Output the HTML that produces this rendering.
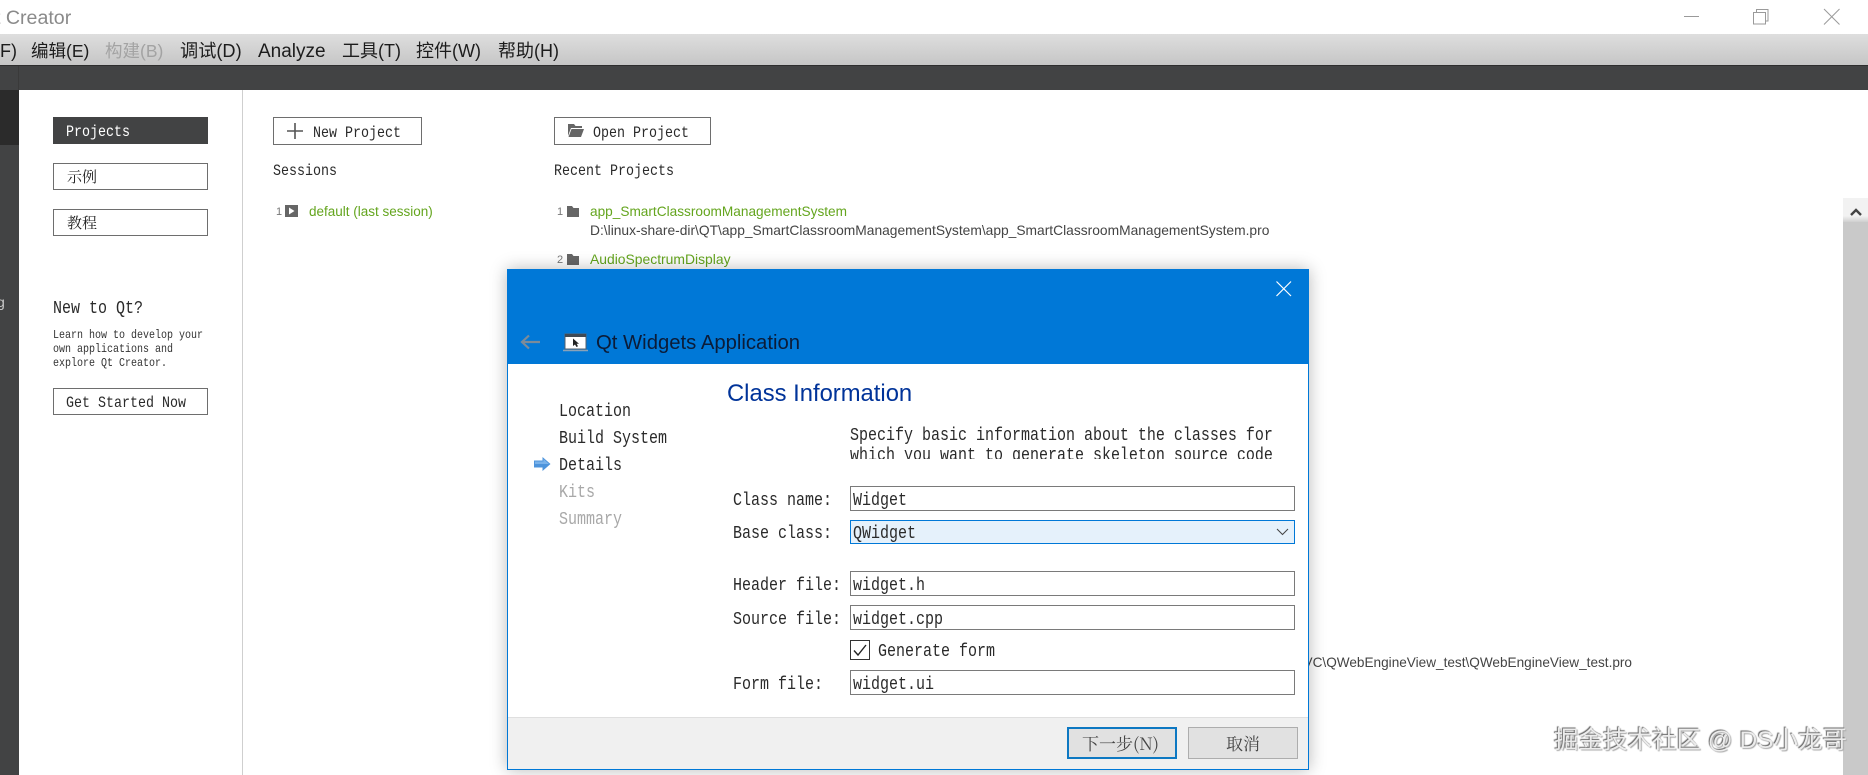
<!DOCTYPE html>
<html lang="zh"><head><meta charset="utf-8"><title>Qt Creator</title>
<style>
html,body{margin:0;padding:0;width:1868px;height:775px;overflow:hidden;background:#fff}
#r{position:relative;width:1868px;height:775px;overflow:hidden;background:#fff}
.a{position:absolute;box-sizing:border-box}
.t{position:absolute;white-space:pre;height:20px;line-height:20px}
.s{font-family:"Liberation Sans","Noto Sans CJK SC",sans-serif}
.m{font-family:"Liberation Mono","Noto Serif CJK SC",monospace;transform-origin:0 50%;transform:translateY(1px) scaleX(.833);color:#2a2a2a}
.m18{font-size:18px}.m16{font-size:16px}.m12{font-size:12px}
.menu{font-size:18px;color:#1c1c1c;top:41px}
.btn{position:absolute;box-sizing:border-box;border:1px solid #6e6e6e;background:#fff}
.g{color:#64a51e;font-size:14px}
.p{color:#444;font-size:13.6px}
.n{color:#777;font-size:11px}
.f{position:absolute;left:850px;width:445px;height:25px;box-sizing:border-box;border:1px solid #7a7a7a;background:#fff}
</style></head><body><div id="r">
<!-- title bar -->
<div class="t s" style="left:-5px;top:8px;font-size:19.6px;color:#8a8a8a">t Creator</div>
<svg class="a" style="left:1680px;top:5px" width="170" height="24" fill="none" stroke="#9a9a9a" stroke-width="1">
<path d="M4 11.500H19"/>
<path d="M76.500 7.500V4.500H88V16H85.500"/>
<rect x="73.500" y="7.500" width="12" height="11.500"/>
<path d="M144 4L159.500 19.500M159.500 4L144 19.500"/>
</svg>
<!-- menu -->
<div class="a" style="left:0;top:34px;width:1868px;height:31px;background:linear-gradient(#dedede,#c6c6c6)"></div>
<div class="t s menu" style="left:0">F)</div>
<div class="t s menu" style="left:31px;font-size:17.500px">编辑(E)</div>
<div class="t s menu" style="left:105px;color:#a3a3a3;font-size:17.500px">构建(B)</div>
<div class="t s menu" style="left:180px;font-size:18.200px">调试(D)</div>
<div class="t s menu" style="left:258px;font-size:19px;top:42px">Analyze</div>
<div class="t s menu" style="left:342px">工具(T)</div>
<div class="t s menu" style="left:416px">控件(W)</div>
<div class="t s menu" style="left:498px">帮助(H)</div>
<!-- dark bar -->
<div class="a" style="left:0;top:65px;width:1868px;height:25px;background:#424344;border-top:1px solid #2e2e2e"></div>
<div class="a" style="left:0;top:90px;width:19px;height:685px;background:#424344"></div>
<div class="a" style="left:0;top:90px;width:19px;height:55px;background:#2b2b2b"></div>
<div class="a" style="left:18px;top:66px;width:1px;height:24px;background:#3a3a3a"></div>
<div class="t s" style="left:-3px;top:292px;font-size:14px;color:#ccc;">g</div>
<!-- left column -->
<div class="a" style="left:242px;top:90px;width:1px;height:685px;background:#cfcfcf"></div>
<div class="a" style="left:53px;top:117px;width:155px;height:27px;background:#424344"></div>
<div class="t m m16" style="left:66px;top:121px;color:#fff">Projects</div>
<div class="btn" style="left:53px;top:163px;width:155px;height:27px"></div>
<div class="t" style="left:67px;top:167px;font:15px/20px 'Noto Serif CJK SC',serif;color:#222">示例</div>
<div class="btn" style="left:53px;top:209px;width:155px;height:27px"></div>
<div class="t" style="left:67px;top:213px;font:15px/20px 'Noto Serif CJK SC',serif;color:#222">教程</div>
<div class="t m m18" style="left:53px;top:298px">New to Qt?</div>
<div class="t m m12" style="left:53px;top:324px;color:#333">Learn how to develop your</div>
<div class="t m m12" style="left:53px;top:338px;color:#333">own applications and</div>
<div class="t m m12" style="left:53px;top:352px;color:#333">explore Qt Creator.</div>
<div class="btn" style="left:53px;top:388px;width:155px;height:27px"></div>
<div class="t m m16" style="left:66px;top:392px">Get Started Now</div>
<!-- main -->
<div class="btn" style="left:273px;top:117px;width:149px;height:28px"></div>
<svg class="a" style="left:287px;top:123px" width="16" height="16"><path d="M8 0V16M0 8H16" stroke="#555" stroke-width="1.600"/></svg>
<div class="t m m16" style="left:313px;top:122px">New Project</div>
<div class="btn" style="left:554px;top:117px;width:157px;height:28px"></div>
<svg class="a" style="left:568px;top:124px" width="16" height="13"><path d="M0 0H6L7.500 2H14V4H3L0 12ZM3.500 5H16L13 13H0.500Z" fill="#666"/></svg>
<div class="t m m16" style="left:593px;top:122px">Open Project</div>
<div class="t m m16" style="left:273px;top:160px">Sessions</div>
<div class="t m m16" style="left:554px;top:160px">Recent Projects</div>
<div class="t s n" style="left:276px;top:202px">1</div>
<svg class="a" style="left:285px;top:205px" width="14" height="13"><rect width="13" height="12" fill="#666"/><path d="M4 2.500L9.500 6L4 9.500Z" fill="#fff"/></svg>
<div class="t s g" style="left:309px;top:202px;font-size:13.500px">default (last session)</div>
<div class="t s n" style="left:557px;top:202px">1</div>
<svg class="a" style="left:567px;top:206px" width="13" height="12"><path d="M0 0H5L6.500 2H12V11H0Z" fill="#666"/></svg>
<div class="t s g" style="left:590px;top:202px;font-size:13.650px">app_SmartClassroomManagementSystem</div>
<div class="t s p" style="left:590px;top:221px;font-size:13.800px">D:\linux-share-dir\QT\app_SmartClassroomManagementSystem\app_SmartClassroomManagementSystem.pro</div>
<div class="t s n" style="left:557px;top:250px">2</div>
<svg class="a" style="left:567px;top:254px" width="13" height="12"><path d="M0 0H5L6.500 2H12V11H0Z" fill="#666"/></svg>
<div class="t s g" style="left:590px;top:249px;font-size:13.900px">AudioSpectrumDisplay</div>
<div class="t s p" style="right:236px;top:653px;font-size:13.600px">D:\VC\QWebEngineView_test\QWebEngineView_test.pro</div>
<!-- scrollbar -->
<div class="a" style="left:1843px;top:198px;width:25px;height:577px;background:#c9c9c9"></div>
<div class="a" style="left:1843px;top:198px;width:25px;height:24px;background:linear-gradient(#f2f2f2 75%,#cfcfcf)"></div>
<svg class="a" style="left:1850px;top:207px" width="12" height="10"><path d="M1 8L6 3L11 8" fill="none" stroke="#444" stroke-width="2.400"/></svg>
<!-- dialog -->
<div class="a" style="left:507px;top:269px;width:802px;height:501px;background:#fff;border:1px solid #0078d7;box-shadow:0 0 16px rgba(0,0,0,.28)"></div>
<div class="a" style="left:507px;top:269px;width:802px;height:95px;background:#0078d7"></div>
<svg class="a" style="left:1276px;top:281px" width="16" height="16"><path d="M.5 .5L15 15M15 .5L.5 15" stroke="#fff" stroke-width="1.200" fill="none"/></svg>
<svg class="a" style="left:520px;top:334px" width="21" height="16"><path d="M20 8H2M9 1.500L2 8L9 14.500" fill="none" stroke="#7c8b99" stroke-width="2.200"/></svg>
<svg class="a" style="left:563px;top:333px" width="25" height="20"><rect x="2" y="1" width="21" height="15" fill="#fff" stroke="#54616e"/><rect x="2" y="1" width="21" height="3" fill="#3f4a55"/><path d="M0 17.500H25" stroke="#8aa2b8" stroke-width="1.500"/><path d="M10 5.500V13L12 11.500L13.500 14L15 13.300L13.600 10.800H16Z" fill="#222"/></svg>
<div class="t s" style="left:596px;top:333px;font-size:20.300px;color:#0b1c38">Qt Widgets Application</div>
<div class="t s" style="left:727px;top:384px;font-size:23.800px;color:#003399">Class Information</div>
<div class="t m m18" style="left:559px;top:401px">Location</div>
<div class="t m m18" style="left:559px;top:428px">Build System</div>
<svg class="a" style="left:534px;top:457px" width="17" height="14"><path d="M0 3.500H8.500V0L16.500 7L8.500 14V10.500H0Z" fill="#4d94dc"/><path d="M1 4.500H9.500V2L15 7L1 7Z" fill="#79b2ea"/></svg>
<div class="t m m18" style="left:559px;top:455px">Details</div>
<div class="t m m18" style="left:559px;top:482px;color:#a8a8a8">Kits</div>
<div class="t m m18" style="left:559px;top:509px;color:#a8a8a8">Summary</div>
<div class="t m m18" style="left:850px;top:425px">Specify basic information about the classes for</div>
<div class="a" style="left:850px;top:440px;width:445px;height:19px;overflow:hidden"><div class="t m m18" style="left:0;top:5px">which you want to generate skeleton source code</div></div>
<div class="t m m18" style="left:733px;top:490px">Class name:</div>
<div class="t m m18" style="left:733px;top:523px">Base class:</div>
<div class="t m m18" style="left:733px;top:575px">Header file:</div>
<div class="t m m18" style="left:733px;top:609px">Source file:</div>
<div class="t m m18" style="left:733px;top:674px">Form file:</div>
<div class="f" style="top:486px"></div><div class="t m m18" style="left:853px;top:490px">Widget</div>
<div class="f" style="top:520px;height:24px;border-color:#0078d7;background:#e5f1fb"></div><div class="t m m18" style="left:853px;top:523px">QWidget</div>
<svg class="a" style="left:1276px;top:528px" width="13" height="8"><path d="M1 1L6.500 6.500L12 1" fill="none" stroke="#444" stroke-width="1"/></svg>
<div class="f" style="top:571px"></div><div class="t m m18" style="left:853px;top:575px">widget.h</div>
<div class="f" style="top:605px"></div><div class="t m m18" style="left:853px;top:609px">widget.cpp</div>
<div class="a" style="left:850px;top:640px;width:20px;height:20px;border:1px solid #333;background:#fff"></div>
<svg class="a" style="left:850px;top:640px" width="20" height="20"><path d="M4 10.500L8 15L16 5" fill="none" stroke="#222" stroke-width="1.400"/></svg>
<div class="t m m18" style="left:878px;top:641px">Generate form</div>
<div class="f" style="top:670px"></div><div class="t m m18" style="left:853px;top:674px">widget.ui</div>
<div class="a" style="left:508px;top:717px;width:800px;height:52px;background:#f0f0f0;border-top:1px solid #dfdfdf"></div>
<div class="a" style="left:1067px;top:727px;width:110px;height:32px;background:#e1e1e1;border:2px solid #0d78c2"></div>
<div class="t" style="left:1082px;top:733px;font:17px/20px 'Noto Serif CJK SC',serif;color:#444">下一步(N)</div>
<div class="a" style="left:1188px;top:727px;width:110px;height:32px;background:#e1e1e1;border:1px solid #adadad"></div>
<div class="t" style="left:1226px;top:733px;font:17px/20px 'Noto Serif CJK SC',serif;color:#444">取消</div>
<!-- watermark -->
<div class="t s" style="left:1554px;top:728px;height:26px;line-height:26px;font-size:24.500px;color:#ececec;text-shadow:-1px -1px 1px #666,1px 1px 1px #aaa">掘金技术社区 @ DS小龙哥</div>
</div></body></html>
